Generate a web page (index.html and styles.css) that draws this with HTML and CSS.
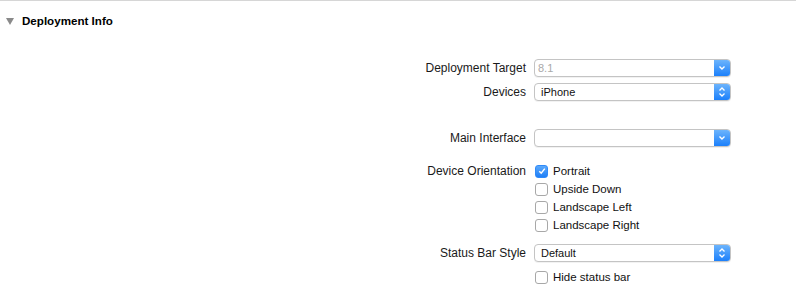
FILE: index.html
```html
<!DOCTYPE html>
<html lang="en">
<head>
  <meta charset="UTF-8" />
  <title>Deployment Info</title>
  <link rel="stylesheet" href="styles.css">
</head>
<body>
  <div class="section">
    <div class="section-head">
      <span class="disclosure"></span>
      <span class="section-title">Deployment Info</span>
    </div>

    <div class="form">
      <div class="row">
        <label class="label">Deployment Target</label>
        <div class="popup disabled">
          <span class="popup-value">8.1</span>
          <span class="popup-arrow">
            <svg width="8" height="6" viewBox="0 0 8 6"><path d="M1.5 1.5 L4 4 L6.5 1.5" fill="none" stroke="#fff" stroke-width="1.4"/></svg>
          </span>
        </div>
      </div>

      <div class="row row-devices">
        <label class="label">Devices</label>
        <div class="popup">
          <span class="popup-value">iPhone</span>
          <span class="popup-arrow">
            <svg width="8" height="12" viewBox="0 0 8 12"><path d="M1.5 4.5 L4 2 L6.5 4.5 M1.5 7.5 L4 10 L6.5 7.5" fill="none" stroke="#fff" stroke-width="1.3"/></svg>
          </span>
        </div>
      </div>

      <div class="row row-main">
        <label class="label">Main Interface</label>
        <div class="popup">
          <span class="popup-value"></span>
          <span class="popup-arrow">
            <svg width="8" height="6" viewBox="0 0 8 6"><path d="M1.5 1.5 L4 4 L6.5 1.5" fill="none" stroke="#fff" stroke-width="1.4"/></svg>
          </span>
        </div>
      </div>

      <div class="row row-orient">
        <label class="label">Device Orientation</label>
        <div class="checks">
          <div class="check">
            <span class="box checked">
              <svg width="10" height="10" viewBox="0 0 10 10"><path d="M2.3 5.2 L4.2 7.2 L7.8 2.6" fill="none" stroke="#fff" stroke-width="1.5"/></svg>
            </span>
            Portrait
          </div>
          <div class="check"><span class="box"></span>Upside Down</div>
          <div class="check"><span class="box"></span>Landscape Left</div>
          <div class="check"><span class="box"></span>Landscape Right</div>
        </div>
      </div>

      <div class="row row-status">
        <label class="label">Status Bar Style</label>
        <div class="popup">
          <span class="popup-value">Default</span>
          <span class="popup-arrow">
            <svg width="8" height="12" viewBox="0 0 8 12"><path d="M1.5 4.5 L4 2 L6.5 4.5 M1.5 7.5 L4 10 L6.5 7.5" fill="none" stroke="#fff" stroke-width="1.3"/></svg>
          </span>
        </div>
      </div>

      <div class="row row-hide">
        <span class="label"></span>
        <div class="check"><span class="box"></span>Hide status bar</div>
      </div>
    </div>
  </div>
</body>
</html>
```

FILE: styles.css
```css
* {
  margin: 0;
  padding: 0;
  box-sizing: border-box;
}

body {
  background: #ffffff;
  font-family: 'Liberation Sans', Arial, sans-serif;
  font-size: 11px;
  color: #1a1a1a;
}

.section {
  border-top: 1px solid #d6d6d6;
}

.section-head {
  display: flex;
  align-items: center;
  height: 39px;
  padding-left: 6px;
}

.disclosure {
  width: 0;
  height: 0;
  border-left: 4px solid transparent;
  border-right: 4px solid transparent;
  border-top: 7px solid #8a8a8a;
  margin-right: 8px;
  margin-top: 1px;
}

.section-title {
  font-weight: bold;
  font-size: 11.6px;
  color: #000;
}

.form {
  padding-top: 19px;
}

.row {
  display: grid;
  grid-template-columns: 526px 197px;
  column-gap: 8px;
  align-items: start;
}

.label {
  text-align: right;
  font-size: 12px;
  line-height: 18px;
  white-space: nowrap;
}

.row-devices { margin-top: 6px; }
.row-main { margin-top: 28px; }
.row-orient { margin-top: 15px; }
.row-status { margin-top: 10px; }
.row-hide { margin-top: 6px; }

.popup {
  display: flex;
  height: 18px;
  border: 1px solid #c4c4c4;
  border-radius: 4px;
  background: #fff;
  box-shadow: 0 1px 0 rgba(0, 0, 0, 0.05);
  overflow: hidden;
}

.popup-value {
  flex: 1;
  line-height: 17px;
  padding-left: 6px;
  color: #111;
}

.popup.disabled .popup-value {
  color: #a9a9a9;
  padding-left: 3px;
}

.popup-arrow {
  width: 16px;
  display: flex;
  align-items: center;
  justify-content: center;
  background: linear-gradient(to bottom, #6cb4fc, #1c80fb);
}

.checks {
  display: flex;
  flex-direction: column;
}

.check {
  display: flex;
  align-items: center;
  height: 18px;
  font-size: 11.5px;
  color: #111;
}

.box {
  width: 13px;
  height: 13px;
  border: 1px solid #a8a8a8;
  border-radius: 3px;
  background: #fff;
  margin-left: 1px;
  margin-right: 5px;
  display: flex;
  align-items: center;
  justify-content: center;
}

.box.checked {
  border-color: #2f8af9;
  background: linear-gradient(to bottom, #5ba9fb, #1f7ff7);
}
```
